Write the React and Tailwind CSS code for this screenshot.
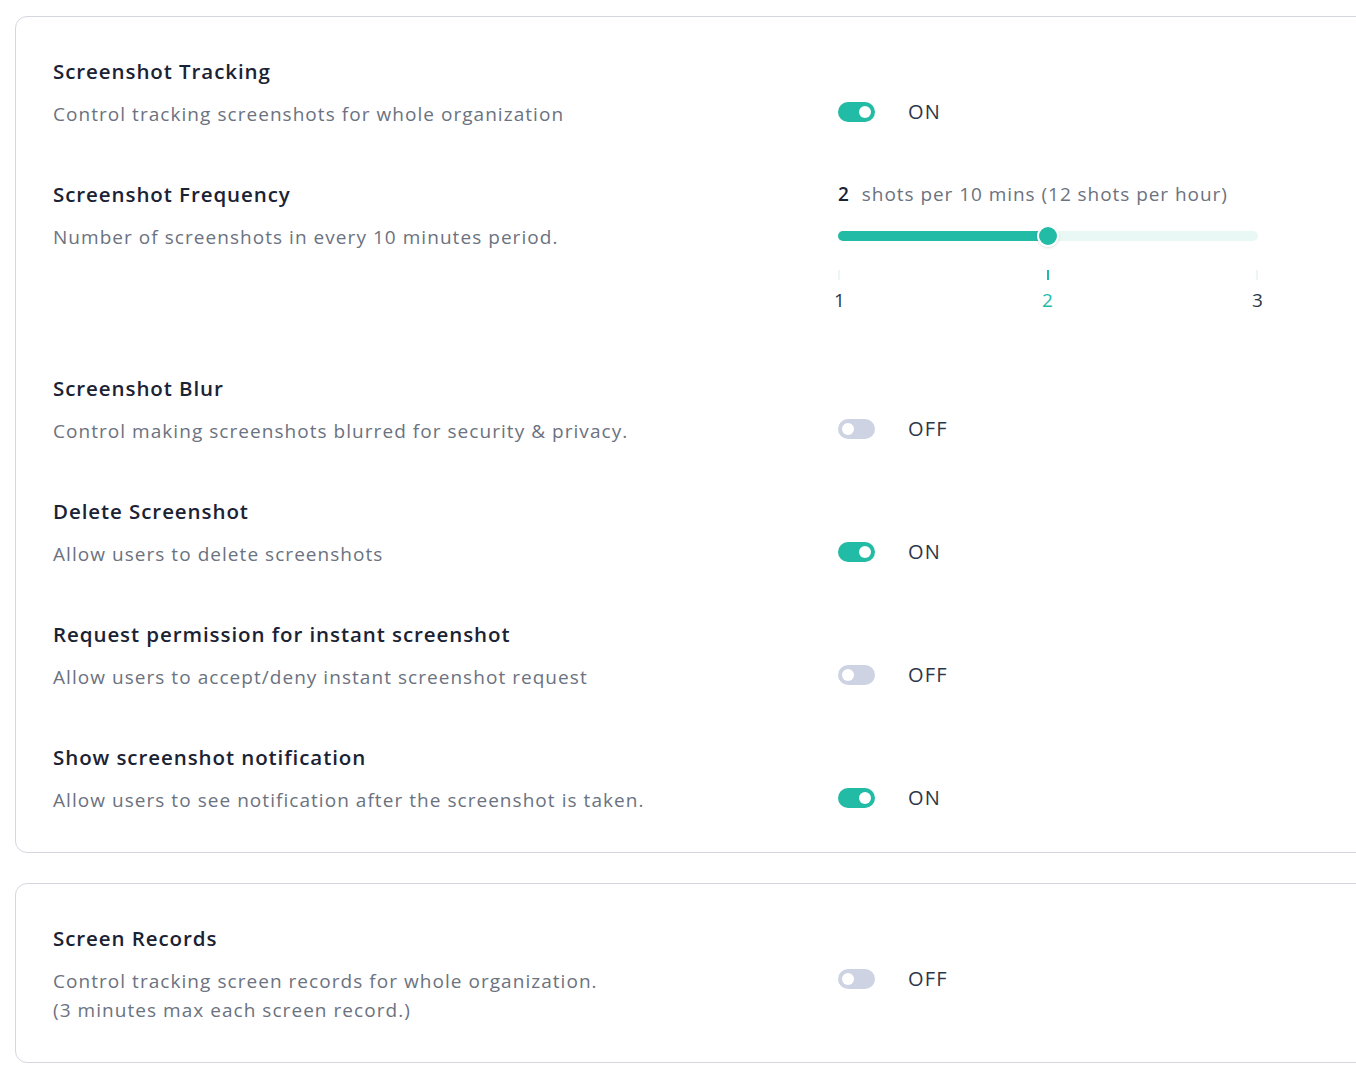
import React from 'react';

const font = { fontFamily: '"Open Sans", "Liberation Sans", sans-serif' };

function Toggle({ on }) {
  return (
    <div className="flex items-center h-[28px]">
      <div className={`w-[37px] h-[20px] rounded-full relative ${on ? 'bg-[#22bba6]' : 'bg-[#cdd3e2]'}`}>
        <div className={`absolute top-[4px] w-[12px] h-[12px] rounded-full bg-white ${on ? 'left-[21px]' : 'left-[4px]'}`} />
      </div>
      <span className="ml-[33px] text-[20px] text-[#2d3748] tracking-[0.06em]">{on ? 'ON' : 'OFF'}</span>
    </div>
  );
}

function Row({ title, desc, children, className = '' }) {
  return (
    <div className={`flex ${className}`}>
      <div className="w-[785px] shrink-0">
        <h3 className="text-[20.5px] leading-[28px] font-semibold text-[#1a2233] tracking-[0.045em]">{title}</h3>
        <div className="mt-[15px] text-[19px] leading-[29px] text-[#6b7280] tracking-[0.055em]">{desc}</div>
      </div>
      <div className="pt-[41px]">{children}</div>
    </div>
  );
}

function Slider() {
  return (
    <div className="w-[420px] -mt-[41px]">
      <div className="h-[28px] flex items-center text-[19px] text-[#6b7280] tracking-[0.05em]">
        <span className="font-semibold text-[#1a2233] mr-[12px]">2</span>
        shots per 10 mins (12 shots per hour)
      </div>
      <div className="relative h-[10px] mt-[23px] rounded-full bg-[#eaf8f5]">
        <div className="absolute left-0 top-0 h-[10px] w-[210px] rounded-full bg-[#22bba6]" />
        <div className="absolute left-[199px] -top-[6px] w-[22px] h-[22px] rounded-full bg-[#22bba6] border-2 border-white shadow" />
      </div>
      <div className="relative h-[50px] mt-[29px]">
        <div className="absolute left-0 top-0 w-[2px] h-[10px] bg-[#eaf8f5]" />
        <div className="absolute left-[209px] top-0 w-[2px] h-[10px] bg-[#22bba6]" />
        <div className="absolute left-[418px] top-0 w-[2px] h-[10px] bg-[#eaf8f5]" />
        <span className="absolute -left-[4px] top-[16px] text-[19px] text-[#2d3748]">1</span>
        <span className="absolute left-[204px] top-[16px] text-[19px] text-[#22bba6]">2</span>
        <span className="absolute left-[414px] top-[16px] text-[19px] text-[#2d3748]">3</span>
      </div>
    </div>
  );
}

export default function App() {
  return (
    <div className="bg-white min-h-[1081px] pt-[16px] pl-[15px] overflow-hidden" style={font}>
      <div className="w-[1400px] border border-[#d4d7df] rounded-[12px] pt-[40px] pb-[37px] pl-[37px] flex flex-col gap-[51px]">
        <Row title="Screenshot Tracking" desc="Control tracking screenshots for whole organization"><Toggle on /></Row>
        <Row title="Screenshot Frequency" desc="Number of screenshots in every 10 minutes period." className="h-[143px]"><Slider /></Row>
        <Row title="Screenshot Blur" desc="Control making screenshots blurred for security & privacy."><Toggle /></Row>
        <Row title="Delete Screenshot" desc="Allow users to delete screenshots"><Toggle on /></Row>
        <Row title="Request permission for instant screenshot" desc="Allow users to accept/deny instant screenshot request"><Toggle /></Row>
        <Row title="Show screenshot notification" desc="Allow users to see notification after the screenshot is taken."><Toggle on /></Row>
      </div>
      <div className="w-[1400px] mt-[30px] border border-[#d4d7df] rounded-[12px] pt-[40px] pb-[37px] pl-[37px]">
        <Row title="Screen Records" desc={<>Control tracking screen records for whole organization.<br />(3 minutes max each screen record.)</>}><Toggle /></Row>
      </div>
    </div>
  );
}
